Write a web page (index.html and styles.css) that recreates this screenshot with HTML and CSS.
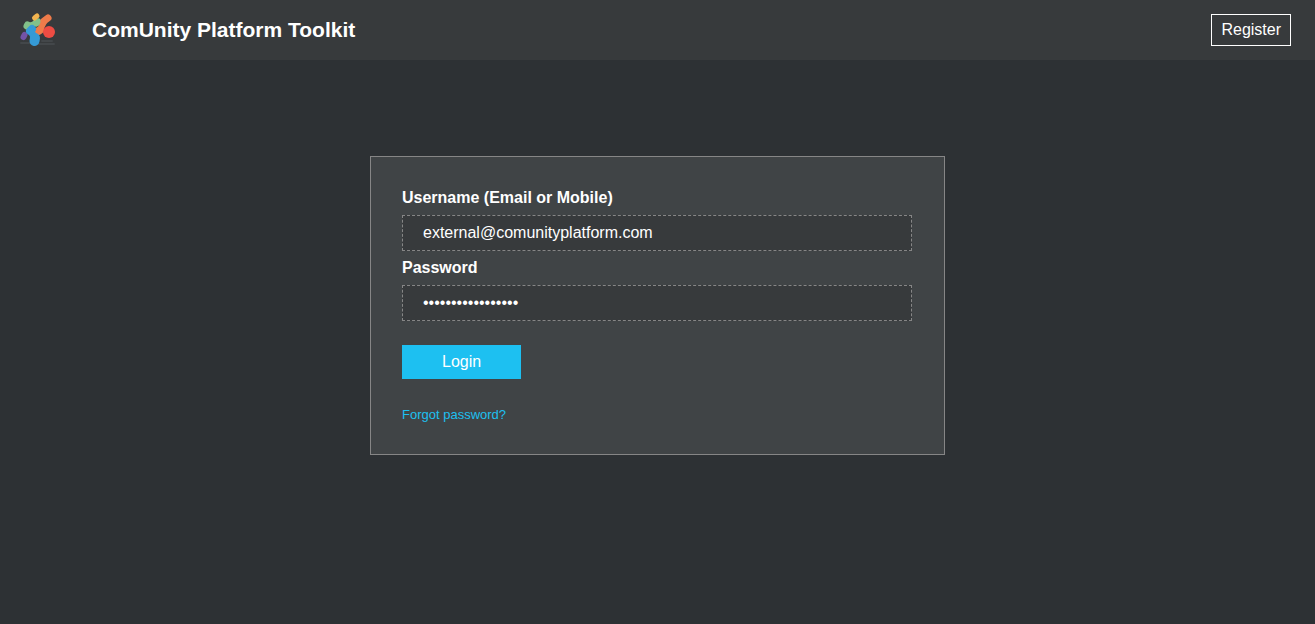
FILE: index.html
```html
<!DOCTYPE html>
<html lang="en">
<head>
<meta charset="utf-8">
<title>ComUnity Platform Toolkit</title>
<link rel="stylesheet" href="styles.css">
</head>
<body>
<header class="topbar">
  <svg class="logo" viewBox="0 0 40 40" aria-hidden="true">
    <path class="logo-shadow" d="M3 33 H16 M18 34 H36 M24 31 H34"/>
    <g class="logo-limbs">
      <path stroke="#7353a6" stroke-width="6" d="M5.500 27 L6.500 25"/>
      <path stroke="#82c08a" stroke-width="7" d="M9 16 L9.500 15"/>
      <path stroke="#82c08a" stroke-width="5" d="M9 16 L19 13"/>
      <path stroke="#82c08a" stroke-width="7" d="M18 13 L20 12"/>
      <path stroke="#f2b44f" stroke-width="5" d="M16.500 8 L19 6"/>
      <path stroke="#ee7b4a" stroke-width="8" d="M20.500 21 L22 20"/>
      <path stroke="#ee7b4a" stroke-width="6" d="M22 20 L26 12"/>
      <path stroke="#ee7b4a" stroke-width="7" d="M26 11 L30 8"/>
      <path stroke="#359ad6" stroke-width="8" d="M12 21 L14 19"/>
      <path stroke="#359ad6" stroke-width="7" d="M13 21 L16 27"/>
      <path stroke="#359ad6" stroke-width="10" d="M17 28 L16.500 31"/>
    </g>
    <circle cx="31" cy="22" r="6" fill="#ed4c43"/>
  </svg>
  <h1 class="brand">ComUnity Platform Toolkit</h1>
  <a class="register" href="#">Register</a>
</header>
<main class="page">
  <form class="card">
    <label class="label" for="username">Username (Email or Mobile)</label>
    <input class="field" id="username" type="text" value="external@comunityplatform.com">
    <label class="label" for="password">Password</label>
    <input class="field" id="password" type="password" value="abcdefghijklmnopq">
    <button class="login" type="button">Login</button>
    <a class="forgot" href="#">Forgot password?</a>
  </form>
</main>
</body>
</html>
```
FILE: styles.css
```css
* {
  box-sizing: border-box;
}

body {
  margin: 0;
  min-height: 100vh;
  background: #2d3134;
  color: #fff;
  font: 16px/20px "Liberation Sans", Arial, sans-serif;
}

.topbar {
  display: flex;
  align-items: center;
  height: 60px;
  padding: 0 24px 0 18px;
  background: #373a3c;
}

.logo {
  width: 40px;
  height: 40px;
}

.logo-shadow {
  fill: none;
  stroke: #43474a;
  stroke-width: 2;
  stroke-linecap: round;
}

.logo-limbs {
  fill: none;
  stroke-linecap: round;
  stroke-linejoin: round;
}

.brand {
  margin: 0 auto 0 34px;
  font-size: 21px;
  line-height: 24px;
}

.register {
  padding: 5px 9px;
  border: 1px solid #fff;
  color: #fff;
  text-decoration: none;
}

.page {
  display: flex;
  justify-content: center;
  padding: 96px 16px 32px;
}

.card {
  display: flex;
  flex-direction: column;
  align-items: flex-start;
  width: 100%;
  max-width: 575px;
  padding: 31px 32px 32px 31px;
  border: 1px solid #868686;
  background: #404446;
}

.label {
  margin-bottom: 7px;
  font-weight: bold;
}

.field {
  width: 100%;
  height: 36px;
  margin: 0 0 7px;
  padding: 0 20px;
  border: 1px dashed #868686;
  border-radius: 0;
  background: #373a3c;
  color: #fff;
  font: inherit;
}

.login {
  height: 34px;
  margin: 17px 0 28px;
  padding: 0 40px;
  border: 0;
  background: #1dc0f1;
  color: #fff;
  font: inherit;
}

.forgot {
  color: #1dc0f1;
  font-size: 13px;
  line-height: 15px;
  text-decoration: none;
}
```
